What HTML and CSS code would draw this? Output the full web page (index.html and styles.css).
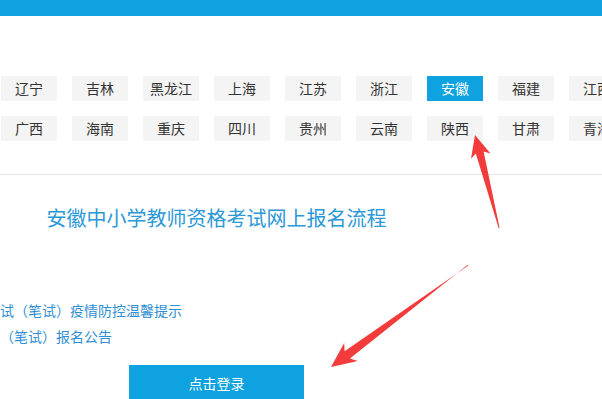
FILE: index.html
```html
<!DOCTYPE html>
<html lang="zh-CN">
<head>
<meta charset="utf-8">
<title>安徽中小学教师资格考试网上报名流程</title>
<link rel="stylesheet" href="styles.css">
</head>
<body>
<div class="page">
  <div class="topbar"></div>
  <div class="provinces">
    <a class="prov">辽宁</a>
    <a class="prov">吉林</a>
    <a class="prov">黑龙江</a>
    <a class="prov">上海</a>
    <a class="prov">江苏</a>
    <a class="prov">浙江</a>
    <a class="prov active">安徽</a>
    <a class="prov">福建</a>
    <a class="prov">江西</a>
    <a class="prov">广西</a>
    <a class="prov">海南</a>
    <a class="prov">重庆</a>
    <a class="prov">四川</a>
    <a class="prov">贵州</a>
    <a class="prov">云南</a>
    <a class="prov">陕西</a>
    <a class="prov">甘肃</a>
    <a class="prov">青海</a>
  </div>
  <div class="divider"></div>
  <div class="content">
    <h1 class="title">安徽中小学教师资格考试网上报名流程</h1>
    <ul class="links">
      <li><a>试（笔试）疫情防控温馨提示</a></li>
      <li><a>（笔试）报名公告</a></li>
    </ul>
    <a class="login">点击登录</a>
  </div>
  <svg class="arrows" width="602" height="399" viewBox="0 0 602 399">
    <polygon fill="#f23c3c" points="475,135 490.5,153.5 483.6,151.6 499.6,228 498.6,228 475.8,153.6 471,158.8"/>
    <polygon fill="#f23c3c" points="331,367 344.2,343 344.6,351.3 468.4,265.6 467.8,264.8 349.9,358.5 357.8,361"/>
  </svg>
</div>
</body>
</html>
```

FILE: styles.css
```css
* { box-sizing: border-box; }
html, body { margin: 0; padding: 0; }
body {
  background: #fff;
  font-family: "Noto Sans CJK SC", "Noto Sans", sans-serif;
  color: #333;
  overflow: hidden;
}
.page {
  position: relative;
  width: 602px;
  height: 399px;
  overflow: hidden;
}
.topbar {
  height: 16px;
  background: #0ea3e0;
}
.provinces {
  display: grid;
  grid-template-columns: repeat(9, 56px);
  grid-auto-rows: 25px;
  column-gap: 15px;
  row-gap: 15px;
  padding: 60px 0 0 1px;
  width: 700px;
}
.prov {
  display: block;
  background: #f4f4f4;
  font-size: 14px;
  line-height: 25px;
  text-align: center;
  color: #333;
  white-space: nowrap;
}
.prov.active {
  background: #0ea3e0;
  color: #fff;
}
.divider {
  margin-top: 33px;
  height: 1px;
  background: #e8e8e8;
}
.content {
  width: 433px;
  padding-top: 29px;
}
.title {
  margin: 0;
  font-size: 20px;
  font-weight: normal;
  line-height: 28px;
  color: #2b98d8;
  text-align: center;
}
.links {
  list-style: none;
  margin: 65px 0 0;
  padding: 0;
}
.links li {
  font-size: 14px;
  line-height: 26px;
  color: #2f8fd4;
  white-space: nowrap;
}
.login {
  display: block;
  width: 175px;
  height: 36px;
  margin: 16px auto 0;
  background: #0ea3e0;
  color: #fff;
  font-size: 14px;
  line-height: 36px;
  text-align: center;
}
.arrows {
  position: absolute;
  left: 0;
  top: 0;
  pointer-events: none;
}
```
